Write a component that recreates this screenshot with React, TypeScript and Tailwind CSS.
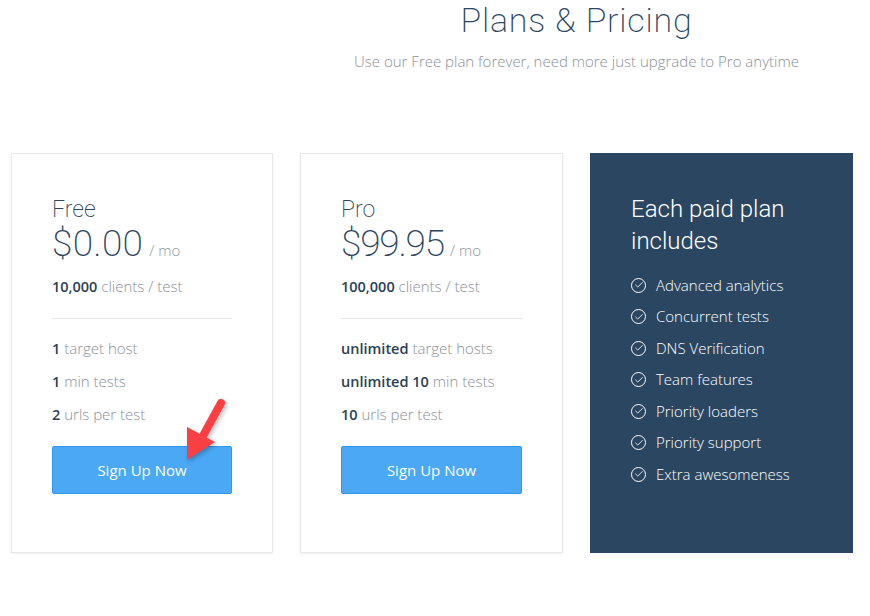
import { Check } from "lucide-react";

const plans = [
  {
    name: "Free",
    price: "$0.00",
    priceClass: "tracking-[0.3px]",
    clients: "10,000",
    rows: [
      ["1", "target host"],
      ["1", "min tests"],
      ["2", "urls per test"],
    ],
  },
  {
    name: "Pro",
    price: "$99.95",
    priceClass: "tracking-[-1.2px]",
    clients: "100,000",
    rows: [
      ["unlimited", "target hosts"],
      ["unlimited 10", "min tests"],
      ["10", "urls per test"],
    ],
  },
];

const features = [
  "Advanced analytics",
  "Concurrent tests",
  "DNS Verification",
  "Team features",
  "Priority loaders",
  "Priority support",
  "Extra awesomeness",
];

function PlanCard({ plan, wide, arrow }: { plan: (typeof plans)[number]; wide?: boolean; arrow?: boolean }) {
  return (
    <div className={`relative h-[400px] bg-white border border-[#e8e8e8] shadow-[0_1px_3px_rgba(0,0,0,0.06)] pl-[40px] pr-[40px] pt-[43px] ${wide ? "w-[263px]" : "w-[262px]"}`}>
      <div className="font-['Roboto'] font-extralight text-[23px] leading-[26px] text-[#2b4560]">{plan.name}</div>
      <div className="flex items-baseline h-[44px] leading-[42px]">
        <span className={`font-['Roboto'] font-extralight text-[37px] text-[#2b4560] ${plan.priceClass}`}>{plan.price}</span>
        <span className="ml-[6px] text-[15px] font-light text-[#8f959c]">/ mo</span>
      </div>
      <div className="mt-[8px] text-[15px] leading-[22px] text-[#8a9097] font-light">
        <b className="font-semibold text-[14.5px] leading-none text-[#2b3f55]">{plan.clients}</b> clients / test
      </div>
      <div className="mt-[21px] border-t border-[#e8e8e8]" />
      <div className="mt-[18px] flex flex-col gap-[11px]">
        {plan.rows.map((r) => (
          <div key={r[1]} className="text-[15px] leading-[22px] text-[#8a9097] font-light">
            <b className="font-semibold text-[14.5px] leading-none text-[#2b3f55]">{r[0]}</b> {r[1]}
          </div>
        ))}
      </div>
      <button className="mt-[21px] w-full h-[48px] rounded-[2px] bg-[#4aa8f5] border border-[#2f96ec] text-white text-[15px]">
        Sign Up Now
      </button>
      {arrow && (
        <svg className="absolute left-[170px] top-[240px] drop-shadow-[2px_2px_2px_rgba(0,0,0,0.25)]" width="50" height="72" viewBox="0 0 50 72">
          <path d="M39 9 L22 40" stroke="#fb4044" strokeWidth="8" strokeLinecap="round" fill="none" />
          <path d="M5 33 L33 48 L5 66 Z" fill="#fb4044" />
        </svg>
      )}
    </div>
  );
}

export default function App() {
  return (
    <div className="w-[870px] h-[616px] bg-white overflow-hidden font-['Open_Sans',sans-serif]">
      <div className="ml-[283px] w-[587px] text-center">
        <h1 className="font-['Roboto'] font-extralight text-[34px] leading-[40px] text-[#2b4560] tracking-[0.8px]">Plans &amp; Pricing</h1>
        <p className="mt-[10px] text-[15px] leading-[22px] font-light text-[#8a9097]">
          Use our Free plan forever, need more just upgrade to Pro anytime
        </p>
      </div>
      <div className="mt-[81px] ml-[11px] flex gap-[27px]">
        <PlanCard plan={plans[0]} arrow />
        <PlanCard plan={plans[1]} wide />
        <div className="w-[263px] h-[400px] bg-[#2a4661] pl-[41px] pt-[40px] text-white">
          <h2 className="font-['Roboto'] font-light text-[24px] leading-[32px]">
            Each paid plan
            <br />
            includes
          </h2>
          <ul className="mt-[17px] flex flex-col gap-[9.5px]">
            {features.map((f) => (
              <li key={f} className="flex items-center h-[22px] text-[15px] font-light">
                <span className="w-[15px] h-[15px] rounded-full border border-white flex items-center justify-center mr-[10px]">
                  <Check size={10} strokeWidth={2} />
                </span>
                {f}
              </li>
            ))}
          </ul>
        </div>
      </div>
    </div>
  );
}
